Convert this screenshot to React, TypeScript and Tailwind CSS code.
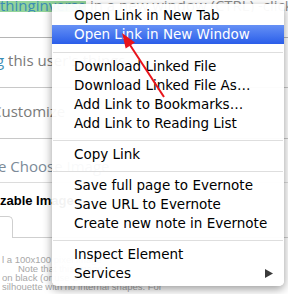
import React from "react";

const Item = ({ label, active = false, sub = false }: { label: string; active?: boolean; sub?: boolean }) => (
  <div
    className={
      "h-[19px] flex items-center justify-between pl-[22px] pr-[11px] whitespace-nowrap leading-[19px] " +
      (active ? "bg-gradient-to-b from-[#6690f5] to-[#2a5de9] text-white" : "text-black")
    }
  >
    <span>{label}</span>
    {sub && (
      <svg width="8" height="9" viewBox="0 0 8 9">
        <path d="M0 0 L8 4.5 L0 9 Z" fill="#3a3a3a" />
      </svg>
    )}
  </div>
);

const Sep = ({ h = 12 }: { h?: number }) => (
  <div className={h === 13 ? "h-[13px] pt-[8px]" : "h-[12px] pt-[7px]"}>
    <div className="h-px bg-[#dedede] mx-px" />
  </div>
);

export default function App() {
  return (
    <div
      className="relative w-[288px] h-[294px] overflow-hidden bg-white"
      style={{ fontFamily: '"Open Sans", sans-serif' }}
    >
      {/* page behind */}
      <div className="flex flex-col w-[288px] [&>*]:shrink-0">
        <div className="h-[12px] flex items-end whitespace-nowrap text-[15px] leading-[12px]">
          <span className="bg-[#93d49a] text-[#3b8db5] h-[11px] w-[88px] overflow-hidden leading-[8px]">thinginverse</span>
          <span className="text-[#8a8a8a] leading-[8px] h-[11px] overflow-hidden">&nbsp;in a new window (CTRL) -click</span>
        </div>
        <div className="h-[26px] border-b border-[#b5b5b5]" />
        <div className="h-[14px]" />
        <div className="h-[16px] whitespace-nowrap text-[15px] leading-[16px] -ml-[4px]">
          <span className="text-[#3b8db5]">g</span>
          <span className="text-[#7a7a7a]"> this user's things</span>
        </div>
        <div className="h-[20px] border-b border-[#c8c8c8]" />
        <div className="h-[15px]" />
        <div className="h-[16px] whitespace-nowrap text-[15px] leading-[16px] -ml-[8px] text-[#7a7a7a]">Customize</div>
        <div className="h-[20px] border-b border-[#c8c8c8]" />
        <div className="h-[19px]" />
        <div className="h-[16px] whitespace-nowrap text-[15px] leading-[16px] -ml-[2px] text-[#7b8a98]">e Choose Image</div>
        <div className="h-[9px] border-b border-[#dcdcdc]" />
        <div className="h-[11px]" />
        <div
          className="h-[14px] whitespace-nowrap text-[13px] leading-[14px] font-bold text-black"
          style={{ fontFamily: '"Liberation Sans", sans-serif' }}
        >
          zable Image
        </div>
        <div className="h-[8px]" />
        <div className="h-[22px] flex">
          <div className="w-[13px] h-[22px] border border-l-0 border-b-0 border-[#cfcfcf] rounded-tr-[5px]" />
          <div className="flex-1 border-b border-[#cfcfcf]" />
        </div>
        <div className="h-[17px]" />
        <div
          className="flex flex-col text-[9.5px] leading-[9px] text-[#a8a8a8] whitespace-nowrap"
          style={{ fontFamily: '"Liberation Sans", sans-serif' }}
        >
          <div className="pl-[2px]">l a 100x100 pixel image</div>
          <div className="pl-[18px]">Note that this image</div>
          <div className="pl-[2px]">on black (or use a</div>
          <div className="pl-[2px]">silhouette with no internal shapes. For</div>
        </div>
      </div>

      {/* context menu */}
      <div
        className="absolute left-[52px] top-[4px] w-[232px] h-[282px] bg-white/95 rounded-b-[5px] pt-[2px] shadow-[0_3px_10px_rgba(0,0,0,0.4)] text-[13.5px]"
        style={{ fontFamily: '"DejaVu Sans", sans-serif' }}
      >
        <Item label="Open Link in New Tab" />
        <Item label="Open Link in New Window" active />
        <Sep h={13} />
        <Item label="Download Linked File" />
        <Item label="Download Linked File As…" />
        <Item label="Add Link to Bookmarks…" />
        <Item label="Add Link to Reading List" />
        <Sep />
        <Item label="Copy Link" />
        <Sep />
        <Item label="Save full page to Evernote" />
        <Item label="Save URL to Evernote" />
        <Item label="Create new note in Evernote" />
        <Sep />
        <Item label="Inspect Element" />
        <Item label="Services" sub />
      </div>

      {/* red arrow annotation */}
      <svg className="absolute left-0 top-0 pointer-events-none" width="288" height="294">
        <line x1="164" y1="97" x2="130" y2="45" stroke="#e8141c" strokeWidth="2" />
        <path d="M122 33 L135 42.5 L125.7 48.5 Z" fill="#e8141c" />
      </svg>
    </div>
  );
}
